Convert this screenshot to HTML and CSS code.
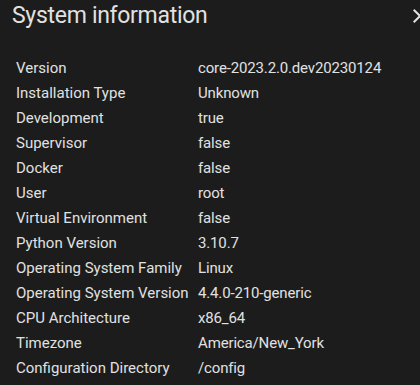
FILE: index.html
```html
<!doctype html>
<html>

<head>
    <title>System information</title>
    <meta charset='utf-8'/>
    <link rel="stylesheet" href="styles.css">
</head>

<body>
    <div id="dialog">
        <div class="header">
            <h2>System information</h2>
            <span class="close" title="close">
                <svg viewBox="0 0 24 24" width="24" height="24"><path d="M19,6.41L17.59,5L12,10.59L6.41,5L5,6.41L10.59,12L5,17.59L6.41,19L12,13.41L17.59,19L19,17.59L13.41,12L19,6.41Z"/></svg>
            </span>
        </div>
        <table class="info">
            <tr><td>Version</td><td>core-2023.2.0.dev20230124</td></tr>
            <tr><td>Installation Type</td><td>Unknown</td></tr>
            <tr><td>Development</td><td>true</td></tr>
            <tr><td>Supervisor</td><td>false</td></tr>
            <tr><td>Docker</td><td>false</td></tr>
            <tr><td>User</td><td>root</td></tr>
            <tr><td>Virtual Environment</td><td>false</td></tr>
            <tr><td>Python Version</td><td>3.10.7</td></tr>
            <tr><td>Operating System Family</td><td>Linux</td></tr>
            <tr><td>Operating System Version</td><td>4.4.0-210-generic</td></tr>
            <tr><td>CPU Architecture</td><td>x86_64</td></tr>
            <tr><td>Timezone</td><td>America/New_York</td></tr>
            <tr><td>Configuration Directory</td><td>/config</td></tr>
        </table>
    </div>
</body>

</html>
```

FILE: styles.css
```css
*{padding:0;margin:0;box-sizing:border-box;}
html,body{height:100%;}
body{
background:#1c1c1c;
color:#e1e1e1;
font-family:Roboto, "Noto Sans", sans-serif;
overflow:hidden;
}

/* header */
.header{
display:flex;
align-items:center;
justify-content:space-between;
height:31px;
padding-left:12px;
}
.header h2{
font-size:23px;
font-weight:400;
letter-spacing:-0.3px;
line-height:28px;
}
.close{
display:flex;
margin-right:-12px;
}
.close svg{fill:#e1e1e1;}

/* table */
.info{
margin:24px 0 0 16px;
border-collapse:collapse;
font-size:15px;
}
.info td{
height:25px;
padding:0;
white-space:nowrap;
}
.info td:first-child{
width:182px;
}
.info td:last-child{
letter-spacing:-0.15px;
}
```
